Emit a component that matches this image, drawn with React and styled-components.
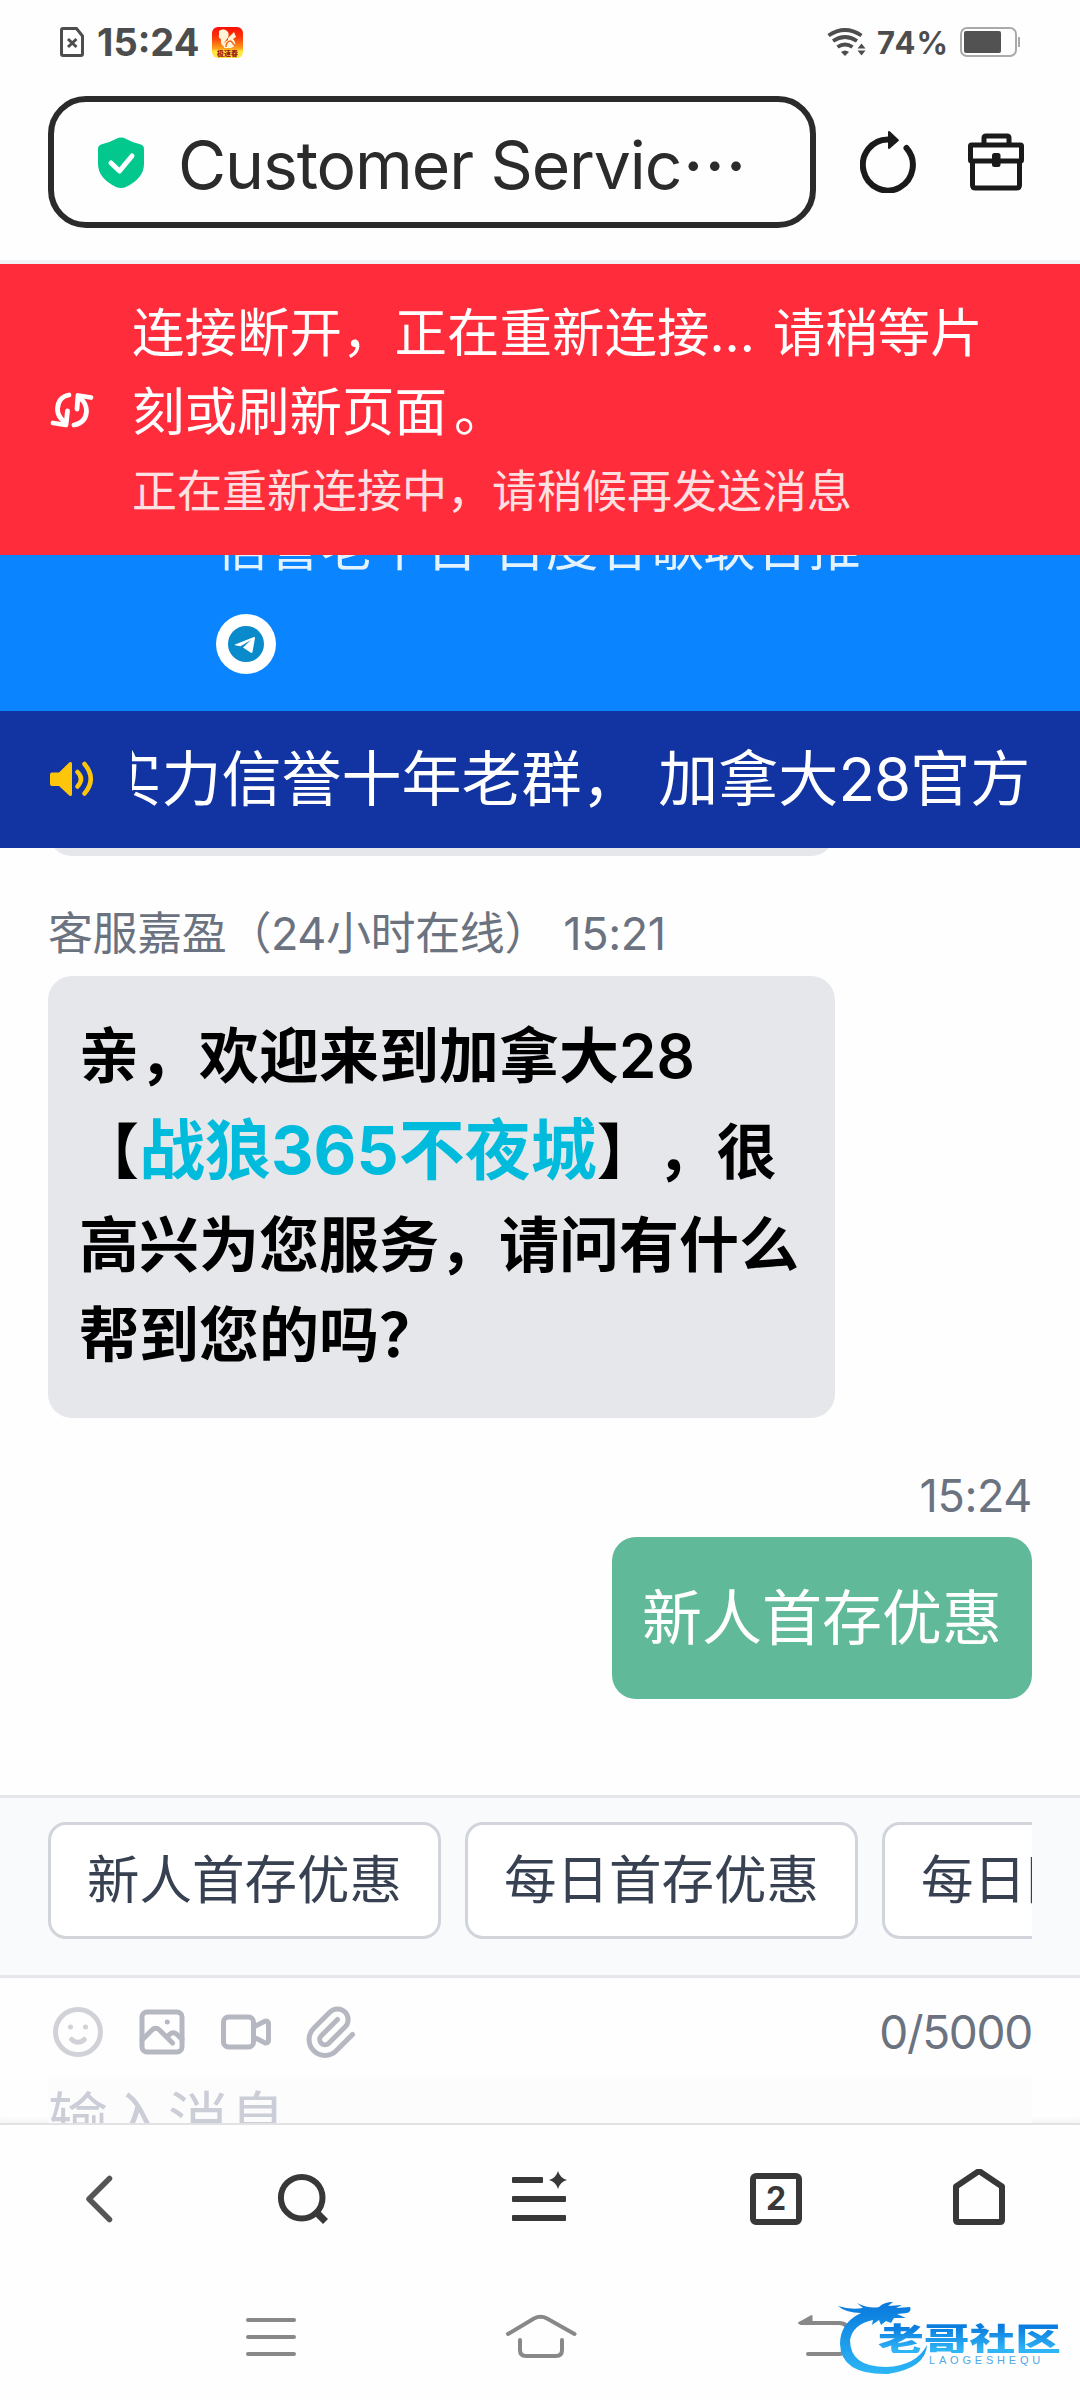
import React from "react";
import styled, { createGlobalStyle } from "styled-components";

const messages = [
  { id: 1, from: "agent", name: "客服嘉盈（24小时在线）", time: "15:21" },
  { id: 2, from: "me", time: "15:24", text: "新人首存优惠" },
];

const quickReplies = ["新人首存优惠", "每日首存优惠", "每日限时优惠"];

const StatusBar = () => (
  <StatusRow>
    <StatusSide>
      <svg width="24" height="30" viewBox="0 0 24 30" fill="none" stroke="#4d4d4d" strokeWidth="3">
        <path d="M3 1.5h13.5L22.5 9v18q0 1.5-1.5 1.5H3Q1.500 28.500 1.500 27V3Q1.500 1.500 3 1.500z" />
        <path d="M8 12l8.500 8M16.500 12L8 20" />
      </svg>
      <Clock>15:24</Clock>
      <AppBadge />
    </StatusSide>
    <StatusSide>
      <svg width="39" height="28" viewBox="0 0 39 28" fill="none" stroke="#4d4d4d" strokeWidth="3.700">
        <path d="M1.500 7.500Q18 -3.500 34.500 7.500" />
        <path d="M6 13Q18 5 30 13" />
        <path d="M10.500 19Q18 14 25.500 19" />
        <path d="M14 24q4-3 8 0l-4 4z" fill="#4d4d4d" stroke="none" />
        <path d="M30.500 20.500l4-5 4 5zM30.500 22.500l4 5 4-5z" fill="#4d4d4d" stroke="none" />
      </svg>
      <Percent>74%</Percent>
      <Battery>
        <BatteryLevel />
      </Battery>
    </StatusSide>
  </StatusRow>
);

const AppBadge = () => (
  <svg width="31" height="31" viewBox="0 0 31 31">
    <defs>
      <linearGradient id="badge" x1="0" y1="0" x2="0" y2="1">
        <stop offset="0" stopColor="#fb0d08" />
        <stop offset="0.35" stopColor="#fb3a0c" />
        <stop offset="0.7" stopColor="#fda31c" />
        <stop offset="0.78" stopColor="#ffe63c" />
        <stop offset="1" stopColor="#ffe84a" />
      </linearGradient>
    </defs>
    <rect width="31" height="31" rx="6" fill="url(#badge)" />
    <path
      d="M7 4q5-4 9 1 2 4-2 8-3 3-1 7-5-2-4-8-3-1-2-4zM16 11l6-6 2 5-3 2q3 3 2 7l-4 2h-7q-1-6 4-8z"
      fill="#fff4d8"
    />
    <path d="M14 20q0-6 5-6M19 14l4 5" fill="none" stroke="#f76a1c" strokeWidth="1.500" />
    <text x="15.500" y="29" textAnchor="middle" fontSize="7" fontWeight="900" fill="#a01c10">
      极速春
    </text>
  </svg>
);

const BrowserHeader = () => (
  <HeaderRow>
    <AddressBox>
      <svg width="46" height="51" viewBox="0 0 46 51">
        <path
          d="M20.500.8q2.500-.8 5 0Q33 5 43 7.500q3 1.200 3 4.500v15q0 14-18 23-5 2-10 0Q0 41 0 27V12q0-3.300 3-4.500Q13 5 20.500.8z"
          fill="#02c88e"
        />
        <path d="M13 26l8.500 8L34 19" fill="none" stroke="#fff" strokeWidth="5" strokeLinecap="round" strokeLinejoin="round" />
      </svg>
      <PageTitle>
        Customer Servic<Dots>···</Dots>
      </PageTitle>
    </AddressBox>
    <svg width="56" height="62" viewBox="0 0 56 62">
      <path d="M28 8.500A25 25.500 0 1 0 46.500 17" fill="none" stroke="#1a1a1a" strokeWidth="6" strokeLinecap="round" />
      <path d="M28 0.500q1-.8 2 0l8.500 8q.8.800 0 1.600L30 17.500q-1 .8-2 0z" fill="#1a1a1a" />
    </svg>
    <svg width="56" height="58" viewBox="0 0 56 58" fill="none" stroke="#1a1a1a" strokeWidth="5">
      <path d="M16 11V5q0-2 2-2h21q2 0 2 2v6" />
      <rect x="2.500" y="12" width="51" height="16" rx="1" />
      <path d="M4.500 28v24q0 3 3 3h41q3 0 3-3V28" />
      <rect x="24" y="20" width="8.500" height="14" rx="2.500" fill="#1a1a1a" stroke="none" />
    </svg>
  </HeaderRow>
);

const ConnectionAlert = () => (
  <AlertBar>
    <svg width="44" height="36" viewBox="0 0 44 36" fill="none" stroke="#fff" strokeWidth="4.800" strokeLinecap="round" strokeLinejoin="round">
      <path d="M19 3Q8 5 7.500 17q0 7 6 12" />
      <path d="M3 31l13 2L17.500 19" />
      <path d="M24 33Q35.500 31 36.500 19.500q0-8-5.500-12.500" />
      <path d="M27 17L28 3.500l13 2" />
    </svg>
    <div>
      <AlertTitle>
        连接断开，正在重新连接... 请稍等片
        <br />
        刻或刷新页面<FullStop>。</FullStop>
      </AlertTitle>
      <AlertNote>正在重新连接中，请稍候再发送消息</AlertNote>
    </div>
  </AlertBar>
);

const Profile = () => (
  <ProfileBar>
    <Slogan>信誉老平台 百度谷歌联合推</Slogan>
    <TelegramButton>
      <svg width="36" height="36" viewBox="0 0 36 36">
        <circle cx="18" cy="18" r="18" fill="#088acb" />
        <path d="M7 18.500L26 11q1.200-.3 1 1L24.500 26q-.5 1.500-2 .6L15 21.500l8-7.500-10.500 6.300L7 19.200q-.8-.3 0-.7z" fill="#fff" />
      </svg>
    </TelegramButton>
  </ProfileBar>
);

const Notice = () => (
  <NoticeBar>
    <svg width="44" height="36" viewBox="0 0 44 36">
      <path d="M2 11.500h7L19.500 1.300Q22 0 22 3v30q0 3-2.500 1.700L9 25H2q-2 0-2-2v-9.500q0-2 2-2z" fill="#fec60a" />
      <path d="M27.500 11q7 7 0 14.500M34.500 3Q47 18 34.500 32.500" fill="none" stroke="#fec60a" strokeWidth="4.500" strokeLinecap="round" />
    </svg>
    <Marquee>
      <p>
        实力信誉十年老群， 加拿大<Digits>28</Digits>官方推荐
      </p>
    </Marquee>
  </NoticeBar>
);

const Composer = () => (
  <ComposerBox>
    <ToolRow>
      <ToolIcon $faded viewBox="0 0 24 24">
        <circle cx="12" cy="12" r="9" />
        <path d="M9 10h.01M15 10h.01M9.500 15a3.500 3.500 0 0 0 5 0" />
      </ToolIcon>
      <ToolIcon viewBox="0 0 24 24">
        <path d="M14.100 8h.01" />
        <rect x="4" y="4" width="16" height="16" rx="2" />
        <path d="M4 15.200l4-4a3 5 0 0 1 3 0l5.200 5.200M14 14l1-1a3 5 0 0 1 3 0l2 2" />
      </ToolIcon>
      <ToolIcon viewBox="0 0 24 24">
        <path d="M15 10l4.553-2.276a1 1 0 0 1 1.447.894v6.764a1 1 0 0 1-1.447.894L15 14z" />
        <rect x="3" y="6" width="12" height="12" rx="2" />
      </ToolIcon>
      <ToolIcon viewBox="0 0 24 24">
        <path d="M15 7l-6.500 6.500a1.500 1.500 0 0 0 3 3L18 10a3 3 0 0 0-6-6l-6.500 6.500a4.500 4.500 0 0 0 9 9L21 13" />
      </ToolIcon>
      <Counter>0/5000</Counter>
    </ToolRow>
    <MessageField>输入消息</MessageField>
  </ComposerBox>
);

const BrowserNav = () => (
  <NavRow>
    <NavIcon width="30" height="60" viewBox="84 2169 30 60" $left={84}>
      <path d="M109.500 2178.500L89 2199l20.500 20.500" fill="none" stroke="#555" strokeWidth="5.500" strokeLinecap="round" strokeLinejoin="round" />
    </NavIcon>
    <NavIcon width="54" height="60" viewBox="276 2169 54 60" $left={162}>
      <circle cx="301.700" cy="2197.700" r="20.800" fill="none" stroke="#383838" strokeWidth="6" />
      <path d="M317 2213l8.500 8.500" stroke="#383838" strokeWidth="7" />
    </NavIcon>
    <NavIcon width="58" height="60" viewBox="511 2169 58 60" $left={181}>
      <g fill="#383838">
        <rect x="512" y="2177" width="31" height="6" rx="1" />
        <rect x="512" y="2196" width="54" height="6" rx="1" />
        <rect x="512" y="2215" width="54" height="6" rx="1" />
        <path d="M558 2171q2 7 9 9-7 2-9 9-2-7-9-9 7-2 9-9z" />
      </g>
    </NavIcon>
    <TabCount>2</TabCount>
    <NavIcon width="54" height="60" viewBox="952 2169 54 60" $left={150}>
      <path
        d="M956 2186.500L977.500 2172q1.500-1 3 0L1002 2186.500V2220q0 2-2 2h-42q-2 0-2-2z"
        fill="none"
        stroke="#383838"
        strokeWidth="6"
        strokeLinejoin="round"
      />
    </NavIcon>
  </NavRow>
);

const SystemNav = () => (
  <SystemRow>
    <NavIcon width="52" height="50" viewBox="245 2312 52 50" $left={245} {...systemStroke}>
      <path d="M248 2320h46M248 2337h46M248 2354h46" />
    </NavIcon>
    <NavIcon width="74" height="50" viewBox="504 2312 74 50" $left={207} {...systemStroke}>
      <path d="M508 2334l26-15.500q6.500-3.500 13 0L574.500 2334" />
      <path d="M520 2340v10q0 6 6 6h30q6 0 6-6v-10" />
    </NavIcon>
    <NavIcon width="56" height="50" viewBox="796 2312 56 50" $left={218} {...systemStroke}>
      <path d="M801 2323h38q9 0 9 9v13q0 9-9 9h-31" />
      <path d="M799 2323l12.500-7v7z" fill="#888" strokeWidth="2" />
    </NavIcon>
    <Watermark>
      <DragonMark />
      <WatermarkText>
        <WatermarkName>老哥社区</WatermarkName>
        <WatermarkSub>LAOGESHEQU</WatermarkSub>
      </WatermarkText>
    </Watermark>
  </SystemRow>
);

const systemStroke = {
  fill: "none",
  stroke: "#888",
  strokeWidth: 4,
  strokeLinecap: "round",
  strokeLinejoin: "round",
};

const DragonMark = () => (
  <svg width="92" height="76" viewBox="0 0 92 76">
    <defs>
      <linearGradient id="dragon" x1="0" y1="0" x2="0" y2="1">
        <stop offset="0" stopColor="#0878dc" />
        <stop offset="1" stopColor="#2db6f6" />
      </linearGradient>
    </defs>
    <path
      d="M0 5q12 4 25 2l-6-5q12 6 22 4 5-5 14-5l-5 4 14-1-6 3 14-1q2 4-3 6l-10 1 9 4-12 0-3 5-5-2-5 4-2-5-7 5 1-5Q15 23 12 39q0 27 36 27 30-1 41-22-1 23-39 29Q3 74 2 43 2 22 23 12 8 12 0 5z"
      fill="url(#dragon)"
    />
  </svg>
);

const App = () => (
  <>
    <GlobalStyle />
    <Screen>
      <StatusBar />
      <BrowserHeader />
      <ConnectionAlert />
      <Profile />
      <Notice />
      <ChatArea>
        <PreviousBubble />
        {messages.map((m) => (
          <Message key={m.id} $mine={m.from === "me"}>
            <Meta>
              {m.name} {m.time}
            </Meta>
            {m.from === "me" ? (
              <MyBubble>{m.text}</MyBubble>
            ) : (
              <AgentBubble>
                亲，欢迎来到加拿大28
                <br />
                【<Brand>战狼365不夜城</Brand>】，很
                <br />
                高兴为您服务，请问有什么
                <br />
                帮到您的吗？
              </AgentBubble>
            )}
          </Message>
        ))}
      </ChatArea>
      <QuickBar>
        <QuickList>
          {quickReplies.map((text) => (
            <QuickButton key={text}>{text}</QuickButton>
          ))}
        </QuickList>
      </QuickBar>
      <Composer />
      <BrowserNav />
      <SystemNav />
    </Screen>
  </>
);

export default App;

const GlobalStyle = createGlobalStyle`
  * {
    box-sizing: border-box;
  }

  body {
    margin: 0;
    background: #fefefe;
    font-family: Inter, "Noto Sans CJK SC", sans-serif;
    text-spacing-trim: space-all;
  }

  svg {
    display: block;
    flex: none;
  }
`;

const Screen = styled.div`
  display: flex;
  flex-direction: column;
  width: 1080px;
  height: 2400px;
  overflow: hidden;
  background: #fefefe;
`;

const StatusRow = styled.div`
  display: flex;
  flex: none;
  justify-content: space-between;
  height: 84px;
  padding: 0 60px;
`;

const StatusSide = styled.div`
  display: flex;
  align-items: center;
  height: 84px;
  color: #4d4d4d;
  font-weight: 700;
`;

const Clock = styled.span`
  width: 103px;
  margin: 0 12px 0 13px;
  font-size: 38px;
  white-space: nowrap;
`;

const Percent = styled.span`
  width: 72px;
  margin: 0 11px;
  font-size: 31px;
  letter-spacing: 1.2px;
  white-space: nowrap;
`;

const Battery = styled.div`
  position: relative;
  width: 57px;
  height: 30px;
  padding: 2px;
  margin-right: 3px;
  border: 2px solid #aaa;
  border-radius: 7px;

  &::after {
    content: "";
    position: absolute;
    top: 8px;
    right: -5px;
    width: 2px;
    height: 10px;
    background: #aaa;
  }
`;

const BatteryLevel = styled.div`
  width: 37px;
  height: 22px;
  border-radius: 2px;
  background: #525252;
`;

const HeaderRow = styled.div`
  display: flex;
  flex: none;
  align-items: center;
  height: 180px;
  padding: 12px 56px 32px 48px;
  border-bottom: 4px solid #f2f3f4;

  > svg:nth-child(2) {
    margin: 0 52px 0 44px;
  }
`;

const AddressBox = styled.div`
  display: flex;
  flex: none;
  align-items: center;
  width: 768px;
  height: 132px;
  padding-left: 44px;
  border: 6px solid #2b2b2b;
  border-radius: 38px;
`;

const PageTitle = styled.div`
  margin-left: 34px;
  padding-top: 5px;
  color: #2b2b2b;
  font-size: 66px;
  letter-spacing: -1.1px;
  white-space: nowrap;
`;

const Dots = styled.span`
  margin-left: 2px;
  font-weight: 500;
  letter-spacing: 1.4px;
`;

const AlertBar = styled.div`
  display: flex;
  flex: none;
  align-items: center;
  gap: 38px;
  height: 291px;
  padding: 0 48px 0 50px;
  background: #ff2d3b;
  color: #fff;
`;

const AlertTitle = styled.div`
  font-size: 52.5px;
  line-height: 1.5;
  white-space: nowrap;
  word-spacing: 3px;
`;

const FullStop = styled.span`
  margin-left: 7px;
`;

const AlertNote = styled.div`
  margin-top: 6px;
  color: #ffe0e2;
  font-size: 45px;
  line-height: 1.5;
`;

const ProfileBar = styled.div`
  display: flex;
  flex: none;
  flex-direction: column;
  justify-content: flex-end;
  gap: 41px;
  height: 156px;
  padding: 0 48px 37px 216px;
  overflow: hidden;
  background: #0b84ff;
`;

const Slogan = styled.div`
  flex: none;
  color: #e2f2ff;
  font-size: 52.5px;
  line-height: 52px;
  white-space: nowrap;
`;

const TelegramButton = styled.div`
  display: flex;
  flex: none;
  align-items: center;
  justify-content: center;
  width: 60px;
  height: 60px;
  border-radius: 50%;
  background: #fff;
`;

const NoticeBar = styled.div`
  display: flex;
  flex: none;
  align-items: center;
  gap: 38px;
  height: 137px;
  padding: 0 48px 2px 50px;
  background: #1234a2;
`;

const Marquee = styled.div`
  flex: 1;
  min-width: 0;
  overflow: hidden;
  color: #fff;
  font-size: 60px;
  line-height: 90px;
  white-space: nowrap;

  p {
    margin: 0 0 0 -30.5px;
  }
`;

const Digits = styled.span`
  letter-spacing: -0.9px;
`;

const ChatArea = styled.div`
  display: flex;
  flex: none;
  flex-direction: column;
  justify-content: flex-end;
  gap: 43px;
  height: 947px;
  padding: 0 48px 96px;
  overflow: hidden;
`;

const PreviousBubble = styled.div`
  flex: none;
  width: 787px;
  height: 60px;
  border-radius: 24px;
  background: #e5e7eb;
`;

const Message = styled.div`
  display: flex;
  flex: none;
  flex-direction: column;
  align-items: ${({ $mine }) => ($mine ? "flex-end" : "flex-start")};
`;

const Meta = styled.div`
  padding-top: 1px;
  margin-bottom: 8px;
  color: #6b7280;
  font-size: 45px;
  line-height: 1.5;
  letter-spacing: -0.4px;
  word-spacing: 2px;
`;

const Bubble = styled.div`
  border-radius: 24px;
  font-size: 60px;
  line-height: 1.5;
  white-space: nowrap;
`;

const AgentBubble = styled(Bubble)`
  width: 787px;
  height: 442px;
  padding: 35px 31px;
  background: #e5e7eb;
  color: #000;
  font-weight: 600;
`;

const Brand = styled.span`
  color: #00bbdc;
  font-size: 66px;
  font-weight: 700;
`;

const MyBubble = styled(Bubble)`
  height: 162px;
  padding: 36px 30px;
  background: #60b998;
  color: #fff;
`;

const QuickBar = styled.div`
  flex: none;
  height: 183px;
  padding: 24px 48px;
  border-top: 3px solid #e5e7eb;
  border-bottom: 3px solid #e5e7eb;
  background: #f9fafc;
`;

const QuickList = styled.div`
  display: flex;
  gap: 24px;
  overflow: hidden;
`;

const QuickButton = styled.button`
  flex: none;
  height: 117px;
  padding: 0 36px;
  border: 3px solid #d1d5db;
  border-radius: 18px;
  background: #fff;
  color: #374151;
  font-family: inherit;
  font-size: 52.5px;
  line-height: 1.5;
`;

const ComposerBox = styled.div`
  flex: none;
  height: 147px;
  padding: 0 48px;
  overflow: hidden;
  border-bottom: 2px solid #e2e2e4;
  box-shadow: inset 0 -6px 6px -4px rgba(0, 0, 0, 0.06);
`;

const ToolRow = styled.div`
  display: flex;
  align-items: center;
  gap: 24px;
  height: 97px;
  padding-top: 11px;
`;

const ToolIcon = styled.svg`
  width: 60px;
  height: 60px;
  fill: none;
  stroke: ${({ $faded }) => ($faded ? "#d1d2d8" : "#b5b8c0")};
  stroke-width: 2;
  stroke-linecap: round;
  stroke-linejoin: round;
`;

const Counter = styled.span`
  margin-left: auto;
  color: #6b7280;
  font-size: 46px;
  letter-spacing: -1.3px;
`;

const MessageField = styled.div`
  height: 90px;
  background: #fcfcfd;
  color: #cbced6;
  font-size: 60px;
  line-height: 91px;
`;

const NavRow = styled.div`
  display: flex;
  flex: none;
  align-items: center;
  height: 148px;
`;

const NavIcon = styled.svg`
  margin-left: ${({ $left }) => $left}px;
`;

const TabCount = styled.div`
  width: 52px;
  height: 52px;
  margin-left: 181px;
  border: 6px solid #383838;
  border-radius: 6px;
  color: #383838;
  font-size: 32px;
  font-weight: 700;
  line-height: 40px;
  text-align: center;
`;

const SystemRow = styled.div`
  position: relative;
  display: flex;
  flex: 1;
  align-items: center;
`;

const Watermark = styled.div`
  position: absolute;
  top: 28px;
  left: 838px;
  display: flex;
`;

const WatermarkText = styled.div`
  position: absolute;
  top: 20px;
  left: 40px;
`;

const WatermarkName = styled.div`
  width: 128px;
  background: linear-gradient(#0b7ddf 20%, #2fb4f6 90%);
  background-clip: text;
  color: transparent;
  font-family: "Noto Sans CJK SC", sans-serif;
  font-size: 32px;
  font-weight: 900;
  line-height: 32px;
  white-space: nowrap;
  transform: scaleX(1.43);
  transform-origin: left;
`;

const WatermarkSub = styled.div`
  margin: 1px 0 0 51px;
  color: #4fa9e8;
  font-family: "Liberation Sans", sans-serif;
  font-size: 11px;
  line-height: 12px;
  letter-spacing: 3.8px;
`;
